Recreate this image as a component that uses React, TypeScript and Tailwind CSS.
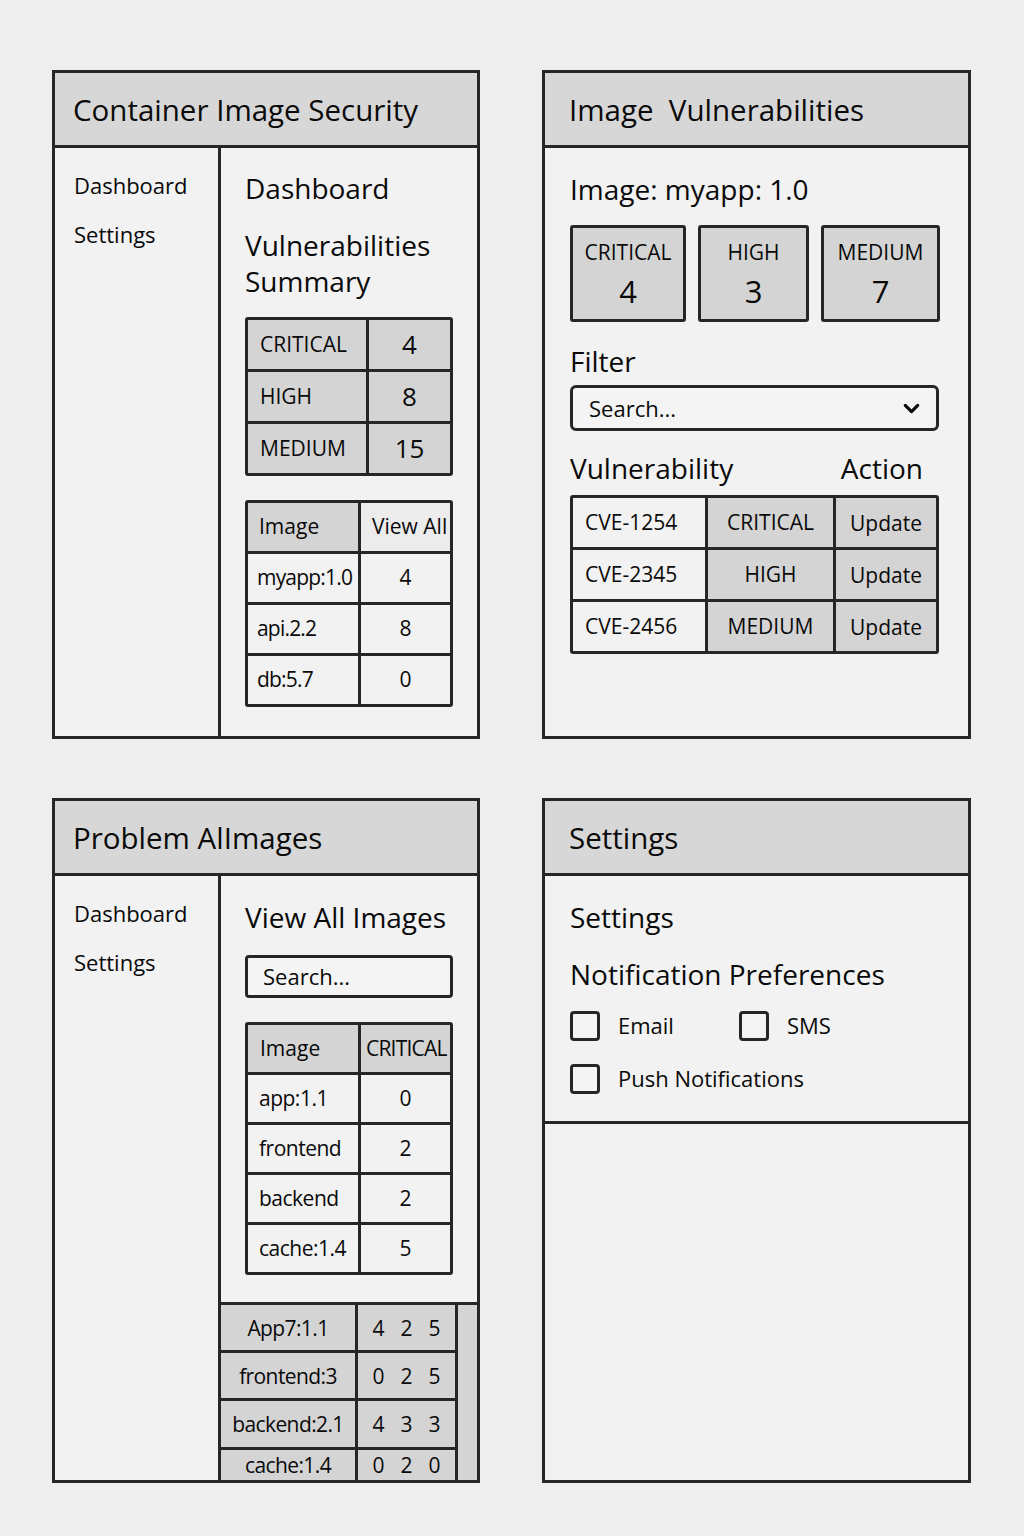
import React from 'react';
import { ChevronDown } from 'lucide-react';

// wireframe board: four panels of a container security app

function Panel({ title, pad, className, children }: { title: string; pad: string; className?: string; children: React.ReactNode }) {
  return (
    <div className={`flex flex-col overflow-hidden border-[3px] border-[#262626] bg-[#f2f2f2] ${className ?? ''}`}>
      <div className={`flex h-[75px] shrink-0 items-center whitespace-pre border-b-[3px] border-[#262626] bg-[#d7d7d7] pt-[2px] text-[29.5px] ${pad}`}>
        {title}
      </div>
      {children}
    </div>
  );
}

function Sidebar() {
  return (
    <div className="flex w-[166px] shrink-0 flex-col gap-[19px] border-r-[3px] border-[#262626] pl-[19px] pt-[22px] text-[22px] leading-[30px]">
      <div>Dashboard</div>
      <div>Settings</div>
    </div>
  );
}

const SUMMARY = [
  ['CRITICAL', '4'],
  ['HIGH', '8'],
  ['MEDIUM', '15'],
];

const IMAGES = [
  ['myapp:1.0', '4'],
  ['api.2.2', '8'],
  ['db:5.7', '0'],
];

const ALL_IMAGES = [
  ['app:1.1', '0'],
  ['frontend', '2'],
  ['backend', '2'],
  ['cache:1.4', '5'],
];

const EXTRA = [
  ['App7:1.1', ['4', '2', '5']],
  ['frontend:3', ['0', '2', '5']],
  ['backend:2.1', ['4', '3', '3']],
  ['cache:1.4', ['0', '2', '0']],
] as const;

const CVES = [
  ['CVE-1254', 'CRITICAL'],
  ['CVE-2345', 'HIGH'],
  ['CVE-2456', 'MEDIUM'],
];

function DashboardPanel() {
  return (
    <Panel title="Container Image Security" pad="pl-[18px]" className="h-[669px]">
      <div className="flex flex-1">
        <Sidebar />
        <div className="flex flex-col pl-[24px] pt-[21px]">
          <div className="text-[28px] leading-[38px]">Dashboard</div>
          <div className="mt-[20px] text-[28px] leading-[36px]">
            Vulnerabilities
            <br />
            Summary
          </div>
          <div className="mt-[18px] grid w-[208px] auto-rows-[49px] grid-cols-[118px_81px] gap-[3px] rounded-[3px] bg-[#262626] p-[3px] text-[21px]">
            {SUMMARY.map(([k, v]) => (
              <React.Fragment key={k}>
                <div className="flex items-center bg-[#d4d4d4] pl-[12px]">{k}</div>
                <div className="flex items-center justify-center bg-[#d4d4d4] text-[26px]">{v}</div>
              </React.Fragment>
            ))}
          </div>
          <div className="mt-[24px] grid w-[208px] auto-rows-[48px] grid-cols-[110px_89px] gap-[3px] rounded-[3px] bg-[#262626] p-[3px] text-[21px]">
            <div className="flex items-center bg-[#d4d4d4] pl-[11px]">Image</div>
            <div className="flex items-center overflow-hidden whitespace-nowrap bg-[#ececec] pl-[11px]">View All</div>
            {IMAGES.map(([k, v]) => (
              <React.Fragment key={k}>
                <div className="flex items-center whitespace-nowrap bg-[#f2f2f2] pl-[9px] tracking-[-0.8px]">{k}</div>
                <div className="flex items-center justify-center bg-[#f2f2f2]">{v}</div>
              </React.Fragment>
            ))}
          </div>
        </div>
      </div>
    </Panel>
  );
}

function VulnPanel() {
  return (
    <Panel title="Image  Vulnerabilities" pad="pl-[24px]" className="h-[669px]">
      <div className="flex flex-col pl-[25px] pr-[28px] pt-[22px]">
        <div className="text-[28px] leading-[38px]">Image: myapp: 1.0</div>
        <div className="mt-[17px] grid h-[97px] grid-cols-[116px_111px_119px] gap-[12px]">
          {[
            ['CRITICAL', '4'],
            ['HIGH', '3'],
            ['MEDIUM', '7'],
          ].map(([k, v]) => (
            <div key={k} className="flex flex-col items-center rounded-[3px] border-[3px] border-[#262626] bg-[#d4d4d4] pt-[11px]">
              <div className="text-[21px] leading-[26px]">{k}</div>
              <div className="mt-[8px] text-[31px] leading-[36px]">{v}</div>
            </div>
          ))}
        </div>
        <div className="mt-[20px] text-[28px] leading-[38px]">Filter</div>
        <div className="mt-[5px] flex h-[46px] w-[369px] items-center justify-between rounded-[6px] border-[3px] border-[#262626] bg-[#f4f4f4] pl-[16px] pr-[12px] text-[22px]">
          <span>Search...</span>
          <ChevronDown size={25} strokeWidth={3} />
        </div>
        <div className="mt-[18px] flex w-[369px] justify-between pr-[16px] text-[28px] leading-[38px]">
          <span>Vulnerability</span>
          <span>Action</span>
        </div>
        <div className="mt-[8px] grid w-[369px] auto-rows-[49px] grid-cols-[132px_125px_100px] gap-[3px] rounded-[3px] bg-[#262626] p-[3px] text-[21px]">
          {CVES.map(([id, sev]) => (
            <React.Fragment key={id}>
              <div className="flex items-center bg-[#f2f2f2] pl-[12px]">{id}</div>
              <div className="flex items-center justify-center bg-[#d4d4d4]">{sev}</div>
              <div className="flex items-center justify-center bg-[#d4d4d4] pt-[2px]">Update</div>
            </React.Fragment>
          ))}
        </div>
      </div>
    </Panel>
  );
}

function AllImagesPanel() {
  return (
    <Panel title="Problem AlImages" pad="pl-[18px]" className="h-[685px]">
      <div className="flex min-h-0 flex-1">
        <Sidebar />
        <div className="flex min-w-0 flex-1 flex-col pt-[22px]">
          <div className="pl-[24px]">
            <div className="text-[28px] leading-[38px]">View All Images</div>
            <div className="mt-[19px] flex h-[43px] w-[208px] items-center rounded-[4px] border-[3px] border-[#262626] bg-[#f4f4f4] pl-[15px] text-[22px]">
              Search...
            </div>
            <div className="mt-[24px] grid w-[208px] auto-rows-[47px] grid-cols-[110px_89px] gap-[3px] rounded-[3px] bg-[#262626] p-[3px] text-[21px]">
              <div className="flex items-center bg-[#d4d4d4] pl-[12px]">Image</div>
              <div className="flex items-center overflow-hidden whitespace-nowrap bg-[#d4d4d4] pl-[5px] tracking-[-0.8px]">CRITICAL</div>
              {ALL_IMAGES.map(([k, v]) => (
                <React.Fragment key={k}>
                  <div className="flex items-center whitespace-nowrap bg-[#f2f2f2] pl-[11px] tracking-[-0.5px]">{k}</div>
                  <div className="flex items-center justify-center bg-[#f2f2f2]">{v}</div>
                </React.Fragment>
              ))}
            </div>
          </div>
          <div className="-ml-[3px] mt-[27px] flex min-h-0 flex-1 overflow-hidden border-t-[3px] border-[#262626]">
            <div className="grid grid-cols-[134px_97px] grid-rows-[45px_45px_46px_1fr] gap-[3px] bg-[#262626] px-[3px] text-[21px]">
              {EXTRA.map(([k, vals]) => (
                <React.Fragment key={k}>
                  <div className="flex items-center justify-center whitespace-nowrap bg-[#d4d4d4] leading-[24px] tracking-[-0.6px]">{k}</div>
                  <div className="flex items-center justify-center gap-[16px] bg-[#d4d4d4] leading-[24px]">
                    {vals.map((n, i) => (
                      <span key={i}>{n}</span>
                    ))}
                  </div>
                </React.Fragment>
              ))}
            </div>
            <div className="flex-1 bg-[#d4d4d4]" />
          </div>
        </div>
      </div>
    </Panel>
  );
}

function Checkbox({ label }: { label: string }) {
  return (
    <div className="flex items-center gap-[18px]">
      <div className="h-[30px] w-[30px] rounded-[4px] border-[3px] border-[#262626] bg-[#f4f4f4]" />
      <span className="text-[22px]">{label}</span>
    </div>
  );
}

function SettingsPanel() {
  return (
    <Panel title="Settings" pad="pl-[24px]" className="h-[685px]">
      <div className="border-b-[3px] border-[#262626] pb-[26px] pl-[25px] pt-[22px]">
        <div className="text-[28px] leading-[38px]">Settings</div>
        <div className="mt-[19px] text-[28px] leading-[38px]">Notification Preferences</div>
        <div className="mt-[16px] flex">
          <div className="w-[169px]">
            <Checkbox label="Email" />
          </div>
          <Checkbox label="SMS" />
        </div>
        <div className="mt-[20px]">
          <Checkbox label="Push Notifications" />
        </div>
      </div>
    </Panel>
  );
}

export default function App() {
  return (
    <div className="min-h-[1536px] bg-[#eeeeee] font-['Open_Sans','Noto_Sans',sans-serif] font-medium text-[#0a0a0a]">
      <div className="grid grid-cols-[428px_429px] gap-x-[62px] gap-y-[59px] pl-[52px] pt-[70px]">
        <DashboardPanel />
        <VulnPanel />
        <AllImagesPanel />
        <SettingsPanel />
      </div>
    </div>
  );
}
